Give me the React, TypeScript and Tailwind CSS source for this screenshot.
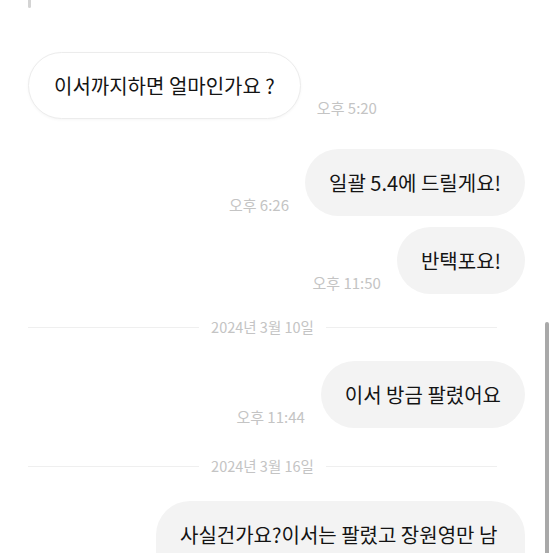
import React from 'react';

type Msg =
  | { kind: 'in'; text: string; time: string; mt: string }
  | { kind: 'out'; text: string; time?: string; mt: string; wide?: boolean }
  | { kind: 'date'; text: string; mt: string };

const messages: Msg[] = [
  { kind: 'in', text: '이서까지하면 얼마인가요 ?', time: '오후 5:20', mt: 'mt-[44px]' },
  { kind: 'out', text: '일괄 5.4에 드릴게요!', time: '오후 6:26', mt: 'mt-[30px]' },
  { kind: 'out', text: '반택포요!', time: '오후 11:50', mt: 'mt-[11px]' },
  { kind: 'date', text: '2024년 3월 10일', mt: 'mt-[23px]' },
  { kind: 'out', text: '이서 방금 팔렸어요', time: '오후 11:44', mt: 'mt-[24px]' },
  { kind: 'date', text: '2024년 3월 16일', mt: 'mt-[28px]' },
  { kind: 'out', text: '사실건가요?이서는 팔렸고 장원영만 남', mt: 'mt-[25px]', wide: true },
];

const Time = ({ value }: { value: string }) => (
  <span className="mb-[2px] shrink-0 text-[15px] leading-[18px] text-[#c4c4c4]">{value}</span>
);

export default function App() {
  return (
    <div
      className="relative h-[553px] w-[553px] overflow-hidden bg-white text-[#141414]"
      style={{ fontFamily: '"Noto Sans CJK KR", "Noto Sans", sans-serif' }}
    >
      <div className="flex flex-col px-7">
        {/* tail of the previous bubble */}
        <div className="h-[8px] w-[3px] rounded-b-sm bg-[#d4d4d4]" />

        {messages.map((m, i) => {
          if (m.kind === 'date') {
            return (
              <div key={i} className={`${m.mt} mr-7 flex items-center gap-3`}>
                <div className="h-px flex-1 bg-[#efefef]" />
                <span className="text-[14.5px] leading-5 text-[#c4c4c4]">{m.text}</span>
                <div className="h-px flex-1 bg-[#efefef]" />
              </div>
            );
          }
          if (m.kind === 'in') {
            return (
              <div key={i} className={`${m.mt} flex items-end gap-[16px]`}>
                <div className="rounded-[34px] border border-[#ececec] bg-white px-[25px] py-[19px] text-[20px] leading-[27px] shadow-[0_1px_3px_rgba(0,0,0,0.04)]">
                  {m.text}
                </div>
                <Time value={m.time} />
              </div>
            );
          }
          return (
            <div key={i} className={`${m.mt} flex items-end justify-end gap-[16px]`}>
              {m.time && <Time value={m.time} />}
              <div
                className={`rounded-[34px] bg-[#f3f3f3] px-[24px] py-[20px] text-[20px] leading-[27px] ${
                  m.wide ? 'w-[369px] pb-[40px]' : ''
                }`}
              >
                {m.text}
              </div>
            </div>
          );
        })}
      </div>

      {/* scrollbar */}
      <div className="absolute bottom-0 right-[4px] top-[322px] w-[4px] rounded-t-sm bg-[#a9a9a9]" />
    </div>
  );
}
